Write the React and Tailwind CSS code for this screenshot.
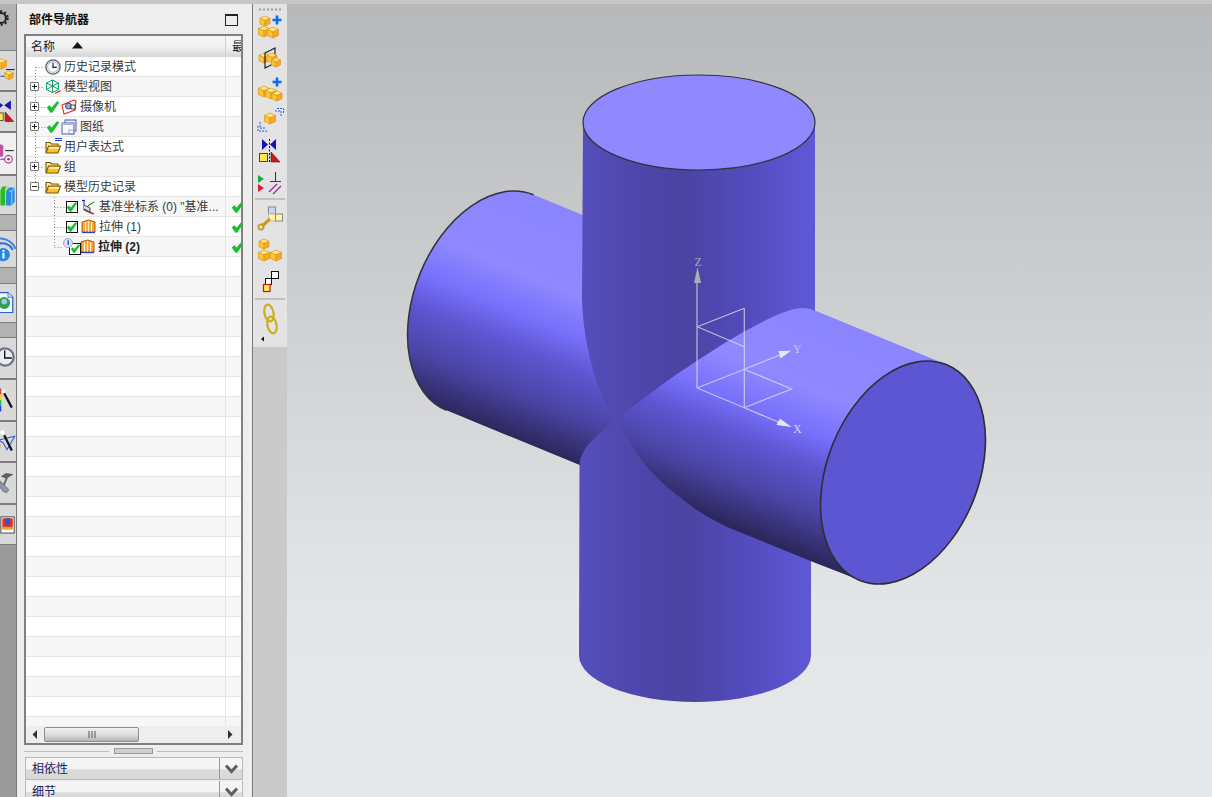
import React from "react";

const Cube = ({ x, y, s = 5 }) => (
  <g stroke="#d8981c" strokeWidth="0.7" strokeLinejoin="round">
    <polygon points={`${x},${y} ${x + s},${y + s * 0.45} ${x},${y + s * 0.9} ${x - s},${y + s * 0.45}`} fill="#ffe680" />
    <polygon points={`${x - s},${y + s * 0.45} ${x},${y + s * 0.9} ${x},${y + s * 2} ${x - s},${y + s * 1.55}`} fill="#ffc534" />
    <polygon points={`${x + s},${y + s * 0.45} ${x},${y + s * 0.9} ${x},${y + s * 2} ${x + s},${y + s * 1.55}`} fill="#f9a824" />
  </g>
);

const Plus = ({ x, y }) => (
  <path d={`M${x - 4.5} ${y}H${x + 4.5}M${x} ${y - 4.5}V${y + 4.5}`} stroke="#0a6cf0" strokeWidth="2.6" />
);

const Check = ({ x = 0, y = 0, s = 1 }) => (
  <path
    transform={`translate(${x} ${y}) scale(${s})`}
    d="M0 6.5 L2.5 4.5 L4.6 7 L10 0.5 L12 1.5 L5 11.5 L3.6 11.5 Z"
    fill="#12c22e"
    stroke="#0a9a22"
    strokeWidth="0.4"
  />
);

const Folder = () => (
  <svg width="16" height="14" viewBox="0 0 16 14">
    <path d="M1 12 V2.5 H5 L6.5 4 H13 V6" fill="#ffeaa8" stroke="#7a5208" strokeWidth="1.1" />
    <path d="M1 13 L3.5 6 H15.5 L13 13 Z" fill="#ffbe1e" stroke="#7a5208" strokeWidth="1.1" />
    <path d="M4.2 7 H14.4 L13.8 9 H3.6 Z" fill="#ffeeaa" />
  </svg>
);

const ClockIcon = () => (
  <svg width="16" height="16" viewBox="0 0 16 16">
    <circle cx="8" cy="8" r="7.2" fill="#d4d9e4" stroke="#5d6470" strokeWidth="1.3" />
    <circle cx="8" cy="8" r="5.2" fill="#f6f8fc" stroke="#aeb6c6" strokeWidth="0.6" />
    <path d="M8 3.8 V8.3 H11.8" stroke="#1c2230" strokeWidth="1.2" fill="none" />
  </svg>
);

const ModelIcon = () => (
  <svg width="16" height="16" viewBox="0 0 16 16">
    <path d="M7.5 1 L13.5 4 V10.5 L7.5 13.5 L1.5 10.5 V4 Z M1.5 4 L7.5 7 L13.5 4 M7.5 7 V13.5 M1.5 10.5 L7.5 7 L13.5 10.5 M7.5 1 V7" fill="none" stroke="#12a070" strokeWidth="1" />
    <path d="M10 14.5 L15.5 11.5" stroke="#e0301c" strokeWidth="1.4" />
  </svg>
);

const CameraIcon = () => (
  <svg width="16" height="16" viewBox="0 0 16 16">
    <path d="M1 6 L13 1 L15 2 L14 11 L3 15 Z" fill="#fff" stroke="#e02c20" strokeWidth="1.1" />
    <circle cx="7.5" cy="7" r="3" fill="#9aa8d8" stroke="#2a2a80" strokeWidth="0.9" />
    <rect x="10" y="6" width="4" height="4" fill="#fff" stroke="#222" strokeWidth="0.8" />
  </svg>
);

const DrawingIcon = () => (
  <svg width="16" height="16" viewBox="0 0 16 16">
    <rect x="4" y="1" width="11" height="11" fill="#e8edf8" stroke="#4a5ea8" strokeWidth="1" />
    <rect x="1" y="4" width="12" height="11" fill="#f6f8fd" stroke="#4a5ea8" strokeWidth="1" />
    <rect x="1" y="4" width="12" height="2" fill="#a8b8e0" />
    <rect x="8" y="11" width="5" height="4" fill="none" stroke="#8a97c0" strokeWidth="0.8" />
  </svg>
);

const CsysIcon = () => (
  <svg width="16" height="16" viewBox="0 0 16 16">
    <path d="M4 2 V11 L13 15 M4 11 L9 6" stroke="#333" strokeWidth="1" fill="none" />
    <path d="M4 6 L10 9 V13 L4 10" stroke="#333" strokeWidth="0.9" fill="#dcdcdc" />
    <path d="M9 6 L14 3" stroke="#1a9a3a" strokeWidth="1.2" />
    <path d="M2 1.5 H5" stroke="#1a1ad0" strokeWidth="1.2" />
    <path d="M10 13 L14 15" stroke="#d02020" strokeWidth="1.3" />
  </svg>
);

const ExtrudeIcon = () => (
  <svg width="15" height="15" viewBox="0 0 15 15">
    <path d="M1 3 L7.5 1 L14 3 V13 H1 Z" fill="#f8a63a" stroke="#b8560c" strokeWidth="1" />
    <path d="M4.5 3 V13 M7.5 2 V13 M10.5 3 V13" stroke="#fff2c8" strokeWidth="1.1" />
    <path d="M1 13.5 H14" stroke="#2840c8" strokeWidth="1.3" />
  </svg>
);

const CheckBox = () => (
  <span className="w-[12px] h-[12px] border border-[#111] bg-white flex items-center justify-center shrink-0">
    <svg width="10" height="10" viewBox="0 0 12 12"><Check /></svg>
  </span>
);

const GreenCheck = () => (
  <svg width="12" height="12" viewBox="0 0 12 12" className="shrink-0"><Check /></svg>
);

const Expander = ({ minus }) => (
  <span className="relative z-10 w-[9px] h-[9px] border border-[#777] rounded-[1px] bg-white flex items-center justify-center shrink-0">
    <svg width="7" height="7" viewBox="0 0 7 7">
      <path d={minus ? "M1 3.5H6" : "M1 3.5H6M3.5 1V6"} stroke="#222" strokeWidth="1" />
    </svg>
  </span>
);

const rows = [
  { label: "历史记录模式", left: <span className="ml-[19px] mr-[3px]"><ClockIcon /></span> },
  { label: "模型视图", left: <><span className="ml-[4px] mr-[6px]"><Expander /></span><ModelIcon /><span className="w-[3px]" /></> },
  { label: "摄像机", left: <><span className="ml-[4px] mr-[8px]"><Expander /></span><GreenCheck /><span className="w-[2px]" /><CameraIcon /><span className="w-[3px]" /></> },
  { label: "图纸", left: <><span className="ml-[4px] mr-[8px]"><Expander /></span><GreenCheck /><span className="w-[2px]" /><DrawingIcon /><span className="w-[3px]" /></> },
  {
    label: "用户表达式",
    left: (
      <span className="relative ml-[19px] mr-[3px] w-[16px]">
        <Folder />
        <span className="absolute right-[-1px] top-[-2px] w-[7px] h-[3px] border-y border-[#2030c0]" />
      </span>
    ),
  },
  { label: "组", left: <><span className="ml-[4px] mr-[6px]"><Expander /></span><Folder /><span className="w-[3px]" /></> },
  { label: "模型历史记录", left: <><span className="ml-[4px] mr-[6px]"><Expander minus /></span><Folder /><span className="w-[3px]" /></> },
  { label: "基准坐标系 (0) \"基准...", right: true, left: <><span className="ml-[40px] mr-[2px]"><CheckBox /></span><CsysIcon /><span className="w-[3px]" /></> },
  { label: "拉伸 (1)", right: true, left: <><span className="ml-[40px] mr-[3px]"><CheckBox /></span><ExtrudeIcon /><span className="w-[3px]" /></> },
  {
    label: "拉伸 (2)",
    bold: true,
    right: true,
    left: (
      <>
        <span className="relative ml-[43px] mr-[-1px] w-[12px] h-[12px] mt-[4px] border border-[#111] bg-white flex items-center justify-center">
          <svg width="9" height="9" viewBox="0 0 12 12"><Check /></svg>
          <span className="absolute left-[-7px] top-[-6px] w-[10px] h-[10px] rounded-full bg-[#dfe4f4] border border-[#9aa2c0] text-[#1a2a90] text-[8px] leading-[8px] font-bold text-center">i</span>
        </span>
        <ExtrudeIcon />
        <span className="w-[3px]" />
      </>
    ),
  },
];

const Tree = () => {
  const blanks = Array.from({ length: 24 });
  return (
    <div className="relative flex-1 overflow-hidden">
      {rows.map((r, i) => (
        <div key={i} className={`flex h-[20px] border-b border-[#e6e6e6] ${i % 2 ? "bg-[#f7f7f7]" : "bg-white"}`}>
          <div className={`flex items-center w-[200px] overflow-hidden whitespace-nowrap border-r border-[#e6e6e6] text-[12px] text-[#3a3a3a] ${r.bold ? "font-bold text-[#222]" : ""}`}>
            {r.left}
            <span>{r.label}</span>
          </div>
          <div className="flex-1 flex items-center pl-[6px] overflow-hidden">
            {r.right ? <GreenCheck /> : null}
          </div>
        </div>
      ))}
      {blanks.map((_, i) => (
        <div key={i} className={`flex h-[20px] border-b border-[#e6e6e6] ${(i + rows.length) % 2 ? "bg-[#f7f7f7]" : "bg-white"}`}>
          <div className="w-[200px] border-r border-[#e6e6e6]" />
        </div>
      ))}
      <svg className="absolute left-0 top-0 w-[215px] h-[670px] pointer-events-none" viewBox="26 57 215 670">
        <g stroke="#8a8a8a" strokeWidth="1" strokeDasharray="1 2" fill="none">
          <path d="M35.5 67V187" />
          <path d="M35.5 67.5H45M35.5 87.5H44M35.5 107.5H46M35.5 127.5H46M35.5 147.5H45M35.5 167.5H44M35.5 187.5H44" />
          <path d="M54.5 197V247" />
          <path d="M54.5 207.5H66M54.5 227.5H66M54.5 247.5H62" />
        </g>
      </svg>
    </div>
  );
};

const HBtn = ({ top, h, light, children }) => (
  <div className={`shrink-0 border-y border-[#7c7c7c] overflow-hidden ${light ? "bg-[#f0f0f0]" : "bg-[#d9d9d9]"}`} style={{ height: h }}>
    <svg className="block w-[16px] h-full" viewBox={`0 ${top} 16 ${h}`}>{children}</svg>
  </div>
);

const Dark = ({ h, children, top = 0 }) => (
  <div className="shrink-0 bg-[#b2b2b2] overflow-hidden" style={{ height: h }}>
    {children ? <svg className="block w-[16px] h-full" viewBox={`0 ${top} 16 ${h}`}>{children}</svg> : null}
  </div>
);

const LeftToolbar = () => (
  <div className="w-[17px] shrink-0 border-r border-[#7a7a7a] bg-[#b2b2b2] flex flex-col overflow-hidden">
    <Dark h={46} top={4}>
      <circle cx="1" cy="18" r="5" fill="none" stroke="#222" strokeWidth="2.2" />
      <circle cx="1" cy="18" r="6.8" fill="none" stroke="#222" strokeWidth="1.8" strokeDasharray="2.2 2.2" />
    </Dark>
    <HBtn top={50} h={41}>
      <Cube x={1} y={58} s={5.5} />
      <Cube x={9} y={71} s={4.5} />
      <path d="M6 69.5H15" stroke="#111" />
      <path d="M0 76.5H4" stroke="#2030d0" />
    </HBtn>
    <HBtn top={91} h={41}>
      <path d="M11 100 L4 105 L11 110 Z" fill="#1414b0" />
      <path d="M-4 100 L3 105 L-4 110 Z" fill="#1414b0" />
      <rect x="-4" y="113" width="7" height="8" fill="#ffe75a" stroke="#554" />
      <path d="M5 112 L14 122 H5 Z" fill="#d01818" stroke="#501010" strokeWidth="0.6" />
    </HBtn>
    <HBtn top={132} h={43} light>
      <rect x="-4" y="144" width="7" height="13" rx="2" fill="#c050a0" />
      <path d="M5 150.5H14" stroke="#111" />
      <circle cx="8.5" cy="159.5" r="4" fill="none" stroke="#a02880" strokeWidth="1.1" />
      <circle cx="8.5" cy="159.5" r="1.3" fill="#a02880" />
      <path d="M0 159.5H4" stroke="#2030d0" />
    </HBtn>
    <HBtn top={175} h={40}>
      <path d="M0 190 L2 186 H7 L5 190 V206 H0 Z" fill="#22c020" />
      <path d="M5 188 L8 185 V204 L5 206 Z" fill="#f0d040" />
      <path d="M6 191 L9 187 H15 V202 L12 206 H6 Z" fill="#2a8ae8" />
      <path d="M9 191 H12 V206 M12 191 L15 187" stroke="#bfe0ff" strokeWidth="0.8" fill="none" />
    </HBtn>
    <Dark h={15} />
    <HBtn top={230} h={38}>
      <path d="M-6 246 A12 12 0 0 1 13 250" stroke="#2a70d8" strokeWidth="2.2" fill="none" />
      <path d="M-8 240 A17 17 0 0 1 16 249" stroke="#3a84e4" strokeWidth="2" fill="none" />
      <circle cx="3" cy="255" r="7" fill="#2288e8" />
      <rect x="2" y="253" width="2.4" height="6" fill="#fff" />
      <circle cx="3.2" cy="251" r="1.2" fill="#fff" />
    </HBtn>
    <Dark h={15} />
    <HBtn top={283} h={40}>
      <path d="M-3 292 H8 L13 297 V313 H-3 Z" fill="#f4f8ff" stroke="#2a60c8" strokeWidth="1.3" />
      <path d="M8 292 V297 H13" fill="#cfe0f8" stroke="#2a60c8" strokeWidth="0.8" />
      <circle cx="4" cy="303" r="6.2" fill="#2aa050" />
      <circle cx="4" cy="301.5" r="3" fill="#9cc8ec" />
    </HBtn>
    <Dark h={14} />
    <HBtn top={337} h={42}>
      <circle cx="5" cy="357" r="9" fill="#e8ecf4" stroke="#707682" strokeWidth="2.4" />
      <path d="M4.5 350 V358 H12" stroke="#111" strokeWidth="1.4" fill="none" />
    </HBtn>
    <HBtn top={379} h={42}>
      <rect x="-2" y="388" width="3" height="6" fill="#f03030" />
      <rect x="-2" y="394" width="3" height="6" fill="#f8d020" />
      <rect x="-2" y="400" width="3" height="6" fill="#20c040" />
      <rect x="-2" y="406" width="3" height="6" fill="#2040f0" />
      <path d="M4 393 L12 408" stroke="#111" strokeWidth="2.4" />
      <circle cx="3" cy="391" r="2" fill="#fff" />
    </HBtn>
    <HBtn top={421} h={41}>
      <path d="M-2 440 L15 436 L7 450 L3 443 Z" fill="none" stroke="#2a60d0" strokeWidth="1.1" />
      <path d="M0 445 L-2 452" stroke="#e0b020" strokeWidth="1.2" />
      <path d="M4 435 L12 451" stroke="#111" strokeWidth="2.4" />
      <circle cx="2" cy="432" r="2.4" fill="#fff" />
    </HBtn>
    <HBtn top={462} h={42}>
      <path d="M1 476 L6 473 L13 474 L8 477 L6 478 Z" fill="#5e5e64" stroke="#333" strokeWidth="0.5" />
      <path d="M7 477 L2 489" stroke="#666" strokeWidth="2" />
      <path d="M0 481 L4 485 L9 490 L7 493 L3 492 L-1 487 Z" fill="#8e96aa" stroke="#555" strokeWidth="0.6" />
    </HBtn>
    <HBtn top={504} h={41}>
      <rect x="0.5" y="516.5" width="14" height="17" fill="#fff" stroke="#444" />
      <rect x="2" y="518" width="11" height="11" fill="#e03020" />
      <path d="M5 518 H10 V523 L7.5 526 L5 523 Z" fill="#2858c8" />
      <rect x="2" y="527" width="11" height="3" fill="#f0a030" />
    </HBtn>
    <div className="flex-1 bg-[#9a9a9a]" />
  </div>
);

const RIcon = ({ top, h, children }) => (
  <svg className="block w-[34px] shrink-0" style={{ height: h }} viewBox={`253 ${top} 34 ${h}`}>{children}</svg>
);

const RightToolbar = () => (
  <div className="w-[35px] shrink-0 border-l border-[#777] bg-[#cacaca] flex flex-col">
    <div className="h-[343px] bg-[#e3e3e3] flex flex-col overflow-hidden">
      <RIcon top={4} h={10}>
        <path d="M259 9.5H282" stroke="#9a9a9a" strokeWidth="2" strokeDasharray="2 2" />
      </RIcon>
      <RIcon top={14} h={28}>
        <Cube x={265} y={16} s={5} />
        <Cube x={264} y={26} s={5.5} />
        <Cube x={273} y={27} s={5.5} />
        <Plus x={277} y={20} />
      </RIcon>
      <RIcon top={42} h={33}>
        <Cube x={264} y={53} s={5} />
        <path d="M265 53 L275 48 V63 L265 68 Z" fill="none" stroke="#222" strokeWidth="1.2" />
        <Cube x={272} y={53} s={5} />
        <Cube x={276} y={58} s={4.5} />
      </RIcon>
      <RIcon top={75} h={29}>
        <Cube x={264} y={86} s={5.5} />
        <Cube x={271} y={88} s={5.5} />
        <Cube x={277} y={91} s={5} />
        <Plus x={277} y={82} />
      </RIcon>
      <RIcon top={104} h={30}>
        <Cube x={270} y={113} s={5.5} />
        <path d="M275 111 H281 V117 M277 108.5 H283.5 V114" stroke="#2a60e0" fill="none" strokeDasharray="2 1" />
        <path d="M265 128 H260 V122 M267 131 H258 V125" stroke="#2a60e0" fill="none" strokeDasharray="2 1" />
      </RIcon>
      <RIcon top={134} h={33}>
        <path d="M262 139 L268 144.5 L262 150 Z" fill="#1414b8" />
        <path d="M276 139 L270 144.5 L276 150 Z" fill="#1414b8" />
        <path d="M269.5 139 V163" stroke="#111" strokeDasharray="2 1.5" />
        <rect x="259.5" y="153.5" width="8" height="8" fill="#ffe95a" stroke="#443" />
        <path d="M271 152 L280 162 H271 Z" fill="#d01818" stroke="#501010" strokeWidth="0.6" />
      </RIcon>
      <RIcon top={167} h={30}>
        <path d="M258 175 L264 179 L258 183 Z" fill="#18a840" />
        <path d="M258 184 L264 188 L258 192 Z" fill="#d81c30" />
        <path d="M275.5 172 V181 M270 181.5 H281" stroke="#6a1a80" strokeWidth="1.1" />
        <path d="M269 192 L277 184 M273 194 L281 186" stroke="#8a2a90" strokeWidth="1.2" />
      </RIcon>
      <div className="h-[2px] mx-[2px] my-[1px] bg-[#c0c0c0] shrink-0" />
      <RIcon top={201} h={34}>
        <rect x="268.5" y="207" width="7" height="7" fill="#d0d4f0" stroke="#888" />
        <rect x="268.5" y="214" width="7" height="7" fill="#fff4a0" stroke="#bbb" />
        <rect x="275.5" y="214" width="7" height="7" fill="#fff4a0" stroke="#888" />
        <path d="M270 219 L262 226" stroke="#c89a20" strokeWidth="3" />
        <circle cx="261" cy="227" r="2.6" fill="none" stroke="#c89a20" strokeWidth="1.8" />
      </RIcon>
      <RIcon top={235} h={31}>
        <Cube x={264} y={239} s={5} />
        <Cube x={264} y={250} s={5.5} />
        <Cube x={276} y={250} s={5.5} />
      </RIcon>
      <RIcon top={266} h={31}>
        <rect x="271.5" y="271.5" width="7" height="7" fill="#fff" stroke="#111" />
        <rect x="265.5" y="278.5" width="6" height="6" fill="#fff" stroke="#111" />
        <rect x="263.5" y="284.5" width="6.5" height="7" fill="#ffe95a" stroke="#d01010" strokeWidth="1.2" />
      </RIcon>
      <div className="h-[2px] mx-[2px] my-[1px] bg-[#c0c0c0] shrink-0" />
      <RIcon top={301} h={34}>
        <ellipse cx="269" cy="313" rx="4.5" ry="8.5" transform="rotate(-12 269 313)" fill="none" stroke="#c8b020" strokeWidth="2.2" />
        <ellipse cx="272" cy="325" rx="4.5" ry="8.5" transform="rotate(-12 272 325)" fill="none" stroke="#c8b020" strokeWidth="2.2" />
      </RIcon>
      <RIcon top={335} h={8}>
        <path d="M264 336.5 V341.5 L261 339 Z" fill="#111" />
      </RIcon>
    </div>
  </div>
);

const Accordion = ({ label, h }) => (
  <div className="flex border border-[#b8b8b8] border-t-0 shrink-0 overflow-hidden bg-[linear-gradient(#f6f6f6_0%,#f3f3f3_54%,#dcdcdc_55%,#d8d8d8_100%)]" style={{ height: h }}>
    <div className="flex-1 pl-[6px] text-[12px] text-[#1c2260] leading-[22px]">{label}</div>
    <div className="w-[23px] border-l border-[#999] flex items-start justify-center pt-[6px]">
      <svg width="13" height="10" viewBox="0 0 13 10"><path d="M1 1.5 L6.5 7.5 L12 1.5" stroke="#606060" strokeWidth="3" fill="none" /></svg>
    </div>
  </div>
);

const Panel = () => (
  <div className="w-[235px] shrink-0 bg-[#eeeeee] flex flex-col overflow-hidden">
    <div className="h-[30px] shrink-0 flex items-center justify-between pl-[12px] pr-[14px] pt-[1px]">
      <span className="text-[12px] font-bold text-[#111]">部件导航器</span>
      <span className="w-[13px] h-[12px] border border-[#222] border-t-2 bg-[#eee] mt-[1px]" />
    </div>
    <div className="ml-[7px] w-[219px] h-[711px] shrink-0 border-2 border-[#808080] bg-white flex flex-col overflow-hidden">
      <div className="h-[21px] shrink-0 flex bg-[linear-gradient(#f8f8f8,#f2f2f2_50%,#d6d6d6)] text-[12px] text-[#222]">
        <div className="w-[200px] flex items-center pl-[5px] border-r border-[#cfcfcf]">
          <span>名称</span>
          <svg width="11" height="7" viewBox="0 0 11 7" className="ml-[17px] mb-[2px]"><path d="M5.5 0 L11 6.5 H0 Z" fill="#111" /></svg>
        </div>
        <div className="flex-1 pl-[6px] flex items-center overflow-hidden">最</div>
      </div>
      <Tree />
      <div className="h-[17px] shrink-0 bg-[#eeeeee] flex items-center relative">
        <svg width="6" height="9" viewBox="0 0 6 9" className="ml-[6px]"><path d="M5 0 V9 L0.5 4.5 Z" fill="#333" /></svg>
        <div className="ml-[6px] w-[95px] h-[15px] border border-[#8f8f8f] rounded-[2px] bg-[linear-gradient(#f2f2f2,#dedede_50%,#b4b4b4)] flex items-center justify-center">
          <svg width="8" height="7" viewBox="0 0 8 7"><path d="M1 0V7M4 0V7M7 0V7" stroke="#555" /></svg>
        </div>
        <svg width="6" height="9" viewBox="0 0 6 9" className="ml-auto mr-[8px]"><path d="M1 0 V9 L5.5 4.5 Z" fill="#333" /></svg>
      </div>
    </div>
    <div className="h-[12px] shrink-0 ml-[7px] w-[219px] flex items-center">
      <div className="w-[85px] h-[1px] bg-[#bdbdbd]" />
      <div className="ml-[5px] w-[39px] h-[6px] bg-[#cfcfcf] border border-[#9a9a9a]" />
      <div className="ml-[4px] flex-1 h-[1px] bg-[#bdbdbd]" />
    </div>
    <div className="ml-[8px] w-[218px] border-t border-[#b8b8b8] flex flex-col gap-[1px]">
      <Accordion label="相依性" h={22} />
      <Accordion label="细节" h={22} />
    </div>
  </div>
);

const Canvas3D = () => (
  <div className="flex-1 bg-[linear-gradient(#b7b8ba_0%,#d5d6d7_50%,#e5e6e8_78%,#e6e7e9_100%)] overflow-hidden">
    <svg className="block w-[925px] h-[793px]" viewBox="287 4 925 793">
      <defs>
        <linearGradient id="hz" gradientUnits="userSpaceOnUse" x1="533.5" y1="194.7" x2="446.5" y2="410.3">
          <stop offset="0" stopColor="#8a84ff" />
          <stop offset="0.33" stopColor="#8f88ff" />
          <stop offset="0.5" stopColor="#7770fb" />
          <stop offset="0.63" stopColor="#5e56d2" />
          <stop offset="0.82" stopColor="#4a44a4" />
          <stop offset="0.93" stopColor="#383278" />
          <stop offset="1" stopColor="#2c285c" />
        </linearGradient>
        <linearGradient id="vt" gradientUnits="userSpaceOnUse" x1="579" y1="0" x2="815" y2="0">
          <stop offset="0" stopColor="#564ebb" />
          <stop offset="0.3" stopColor="#4d45a8" />
          <stop offset="0.45" stopColor="#4c44a2" />
          <stop offset="0.7" stopColor="#534bbc" />
          <stop offset="1" stopColor="#5f59d8" />
        </linearGradient>
      </defs>

      <path d="M533.5 194.7 A116.2 75.7 -68.2 0 0 446.5 410.3 L859.5 580 L946.5 364.7 Z" fill="url(#hz)" />
      <path d="M533.5 194.7 A116.2 75.7 -68.2 0 0 446.5 410.3" fill="none" stroke="#33333a" strokeWidth="1.5" />

      <path d="M583 122 L582 300 C584 350 597 392 615 420 L815 430 L815 122 Z" fill="url(#vt)" />
      <ellipse cx="699" cy="122.5" rx="116" ry="47.5" fill="#8f88ff" stroke="#33333a" strokeWidth="1.2" />
      <path d="M615 420 C600 433 580 447 579.5 466 L579 655 A116 47 0 0 0 811 655 L811 540 L700 480 Z" fill="url(#vt)" />

      <path
        d="M615 420 C636 404 658 387 680 372 C703 357 725 342 747 330 C768 319 788 308 803 308 C807 308 811 309 815 311 L946.5 364.7 L859.5 580 L813 562 L727 527 C717 522 708 517 700 512 C690 506 684 500 677 495 C665 486 656 477 647 467 C640 458 633 447 627 437 C623 431 619 426 615 420 Z"
        fill="url(#hz)"
      />
      <ellipse cx="903" cy="472.5" rx="116.2" ry="75.7" transform="rotate(-68.2 903 472.5)" fill="#5c56d2" stroke="#2e2e34" strokeWidth="1.6" />

      <g stroke="#e2e2e6" strokeWidth="1.2" fill="none" opacity="0.75">
        <path d="M697 388 V282" />
        <path d="M697 388 L744.3 407.7 L791.7 389 L744.3 369.3 L697 388" />
        <path d="M744.3 407.7 L780 422.7" />
        <path d="M744.3 369.3 L780 355" />
        <path d="M744.3 308.3 V407.7" />
        <path d="M697.3 326.7 L744.3 308.3" />
        <path d="M697.3 326.7 L744.3 346.7" />
      </g>
      <path d="M697.5 267 L701 283 H694 Z" fill="#aeaeb2" />
      <path d="M791.7 427 L780 418.5 L776.5 425 Z" fill="#e6e6e8" />
      <path d="M791 350.7 L778.5 351 L780.5 358.5 Z" fill="#e6e6e8" />
      <text x="694.5" y="266" fontSize="12" fontFamily="Liberation Serif, serif" fill="#a8a8b8">Z</text>
      <text x="793" y="433" fontSize="12" fontFamily="Liberation Serif, serif" fill="#d4d4e4">X</text>
      <text x="793" y="353" fontSize="12" fontFamily="Liberation Serif, serif" fill="#c8c8e0">Y</text>
    </svg>
  </div>
);

export default function App() {
  return (
    <div className="w-[1212px] h-[797px] overflow-hidden flex flex-col bg-[#cccccc] font-['Liberation_Sans','Noto_Sans_CJK_SC',sans-serif]">
      <div className="h-[4px] shrink-0 bg-[#c6c6c6]" />
      <div className="flex-1 flex min-h-0">
        <LeftToolbar />
        <Panel />
        <RightToolbar />
        <Canvas3D />
      </div>
    </div>
  );
}
